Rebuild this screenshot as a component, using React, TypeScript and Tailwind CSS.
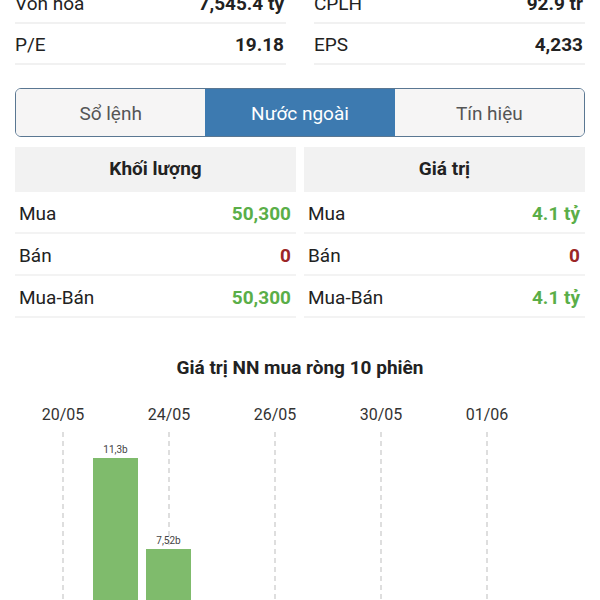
import React from "react";

const font = { fontFamily: "Roboto, 'Noto Sans', Arial, sans-serif" };

function StatRow({ l1, v1, l2, v2 }: { l1: string; v1: string; l2: string; v2: string }) {
  return (
    <div className="grid grid-cols-[271px_271px] gap-x-[28px] px-[15px]">
      <div className="flex h-[41px] items-center justify-between border-b-2 border-[#f1f1f1] pr-[2px] pt-[3px]">
        <span className="text-[19px] text-[#222]">{l1}</span>
        <span className="text-[19px] font-bold text-[#222]">{v1}</span>
      </div>
      <div className="flex h-[41px] items-center justify-between border-b-2 border-[#f1f1f1] pr-[2px] pt-[3px]">
        <span className="text-[19px] text-[#222]">{l2}</span>
        <span className="text-[19px] font-bold text-[#222]">{v2}</span>
      </div>
    </div>
  );
}

function Col({ title, rows }: { title: string; rows: { label: string; value: string; color: string }[] }) {
  return (
    <div className="flex flex-col">
      <div className="flex h-[45px] items-center justify-center bg-[#f2f2f2] text-[19px] font-bold text-[#222]">
        {title}
      </div>
      {rows.map((r) => (
        <div
          key={r.label}
          className="flex h-[42px] items-center justify-between border-b-2 border-[#f3f3f3] pl-[4px] pr-[5px] pt-[4px]"
        >
          <span className="text-[19px] text-[#222]">{r.label}</span>
          <span className={`text-[19px] font-bold ${r.color}`}>{r.value}</span>
        </div>
      ))}
    </div>
  );
}

export default function App() {
  const green = "text-[#5aae48]";
  const red = "text-[#9b2626]";
  const dates = [
    { x: 63, t: "20/05" },
    { x: 169, t: "24/05" },
    { x: 275, t: "26/05" },
    { x: 381, t: "30/05" },
    { x: 487, t: "01/06" },
  ];
  return (
    <div className="h-[600px] w-[600px] overflow-hidden bg-white" style={font}>
      <div className="-mt-[17px]">
        <StatRow l1="Vốn hóa" v1="7,545.4 tỷ" l2="CPLH" v2="92.9 tr" />
        <StatRow l1="P/E" v1="19.18" l2="EPS" v2="4,233" />
      </div>

      <div className="mx-[15px] mt-[23px] flex h-[49px] overflow-hidden rounded-[6px] border-[1.5px] border-[#5a7792]">
        <div className="flex flex-1 items-center justify-center bg-[#f6f5f5] pt-[3px] text-[19px] text-[#555]">Sổ lệnh</div>
        <div className="flex flex-1 items-center justify-center bg-[#3d7ab0] pt-[3px] text-[19px] text-white">Nước ngoài</div>
        <div className="flex flex-1 items-center justify-center bg-[#f6f5f5] pt-[3px] text-[19px] text-[#555]">Tín hiệu</div>
      </div>

      <div className="mx-[15px] mt-[10px] grid grid-cols-[281px_281px] gap-x-[8px]">
        <Col
          title="Khối lượng"
          rows={[
            { label: "Mua", value: "50,300", color: green },
            { label: "Bán", value: "0", color: red },
            { label: "Mua-Bán", value: "50,300", color: green },
          ]}
        />
        <Col
          title="Giá trị"
          rows={[
            { label: "Mua", value: "4.1 tỷ", color: green },
            { label: "Bán", value: "0", color: red },
            { label: "Mua-Bán", value: "4.1 tỷ", color: green },
          ]}
        />
      </div>

      <div className="mt-[40px] flex h-[20px] items-center justify-center text-[19px] font-bold text-[#222]">
        Giá trị NN mua ròng 10 phiên
      </div>

      <svg width="600" height="240" className="mt-[7px] block" style={font}>
        {dates.map((d) => (
          <g key={d.t}>
            <text x={d.x} y={35} textAnchor="middle" fontSize="16" fill="#333">
              {d.t}
            </text>
            <line x1={d.x} y1={47} x2={d.x} y2={240} stroke="#bdbdbd" strokeWidth="1" strokeDasharray="5 4" />
          </g>
        ))}
        <rect x={93} y={73} width={45} height={170} fill="#7fbb6c" />
        <text x={115.5} y={68} textAnchor="middle" fontSize="10" fill="#444">
          11,3b
        </text>
        <rect x={146} y={164} width={45} height={80} fill="#7fbb6c" />
        <text x={168.5} y={159} textAnchor="middle" fontSize="10" fill="#444">
          7,52b
        </text>
      </svg>
    </div>
  );
}
